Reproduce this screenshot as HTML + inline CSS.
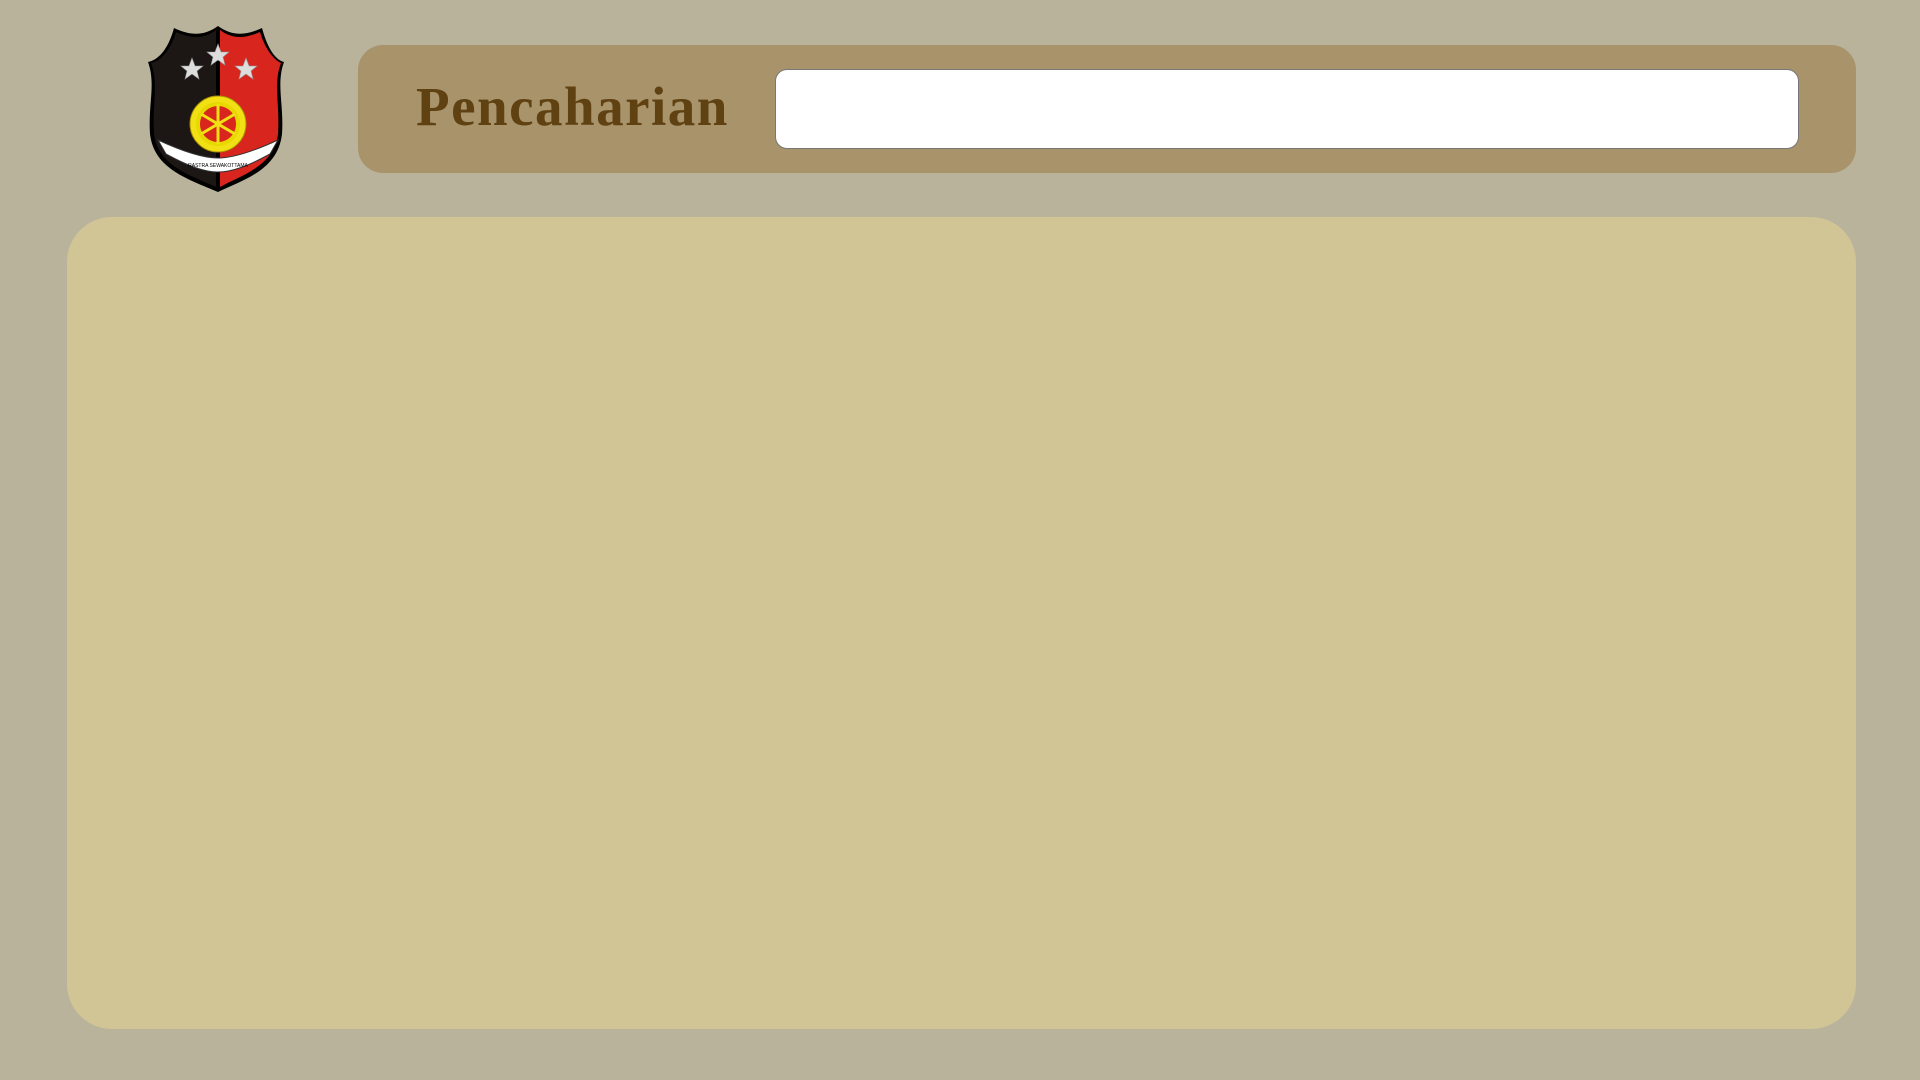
<!DOCTYPE html>
<html><head><meta charset="utf-8"><style>
html,body{margin:0;padding:0;width:1920px;height:1080px;background:#bab39c;overflow:hidden;position:relative}
.hdr{position:absolute;left:358px;top:45px;width:1498px;height:128px;background:#a8936b;border-radius:25px}
.ttl{position:absolute;left:416px;top:72px;font-family:"Liberation Serif",serif;font-weight:bold;font-size:55px;color:#5f4112;line-height:70px;letter-spacing:1.5px}
.inp{position:absolute;left:775px;top:69px;width:1024px;height:80px;background:#fff;border:1px solid #777;border-radius:12px;box-sizing:border-box}
.panel{position:absolute;left:67px;top:217px;width:1789px;height:812px;background:#d1c596;border-radius:45px}
svg{position:absolute;left:146px;top:24px}
</style></head><body>
<svg width="140" height="170" viewBox="0 0 140 170">
<path d="M2,38 C12,36 22,26 28,4 C45,12 58,12 72,2 C86,12 99,12 116,4 C122,26 130,36 138,38 C130,60 138,80 136,110 C132,145 100,155 72,168 C42,155 8,145 4,110 C2,80 10,60 2,38Z" fill="#000"/>
<path d="M5,39 C14,37 24,28 30,8 C46,15 58,15 70,6 L70,163 C44,151 12,142 8,110 C6,80 13,60 5,39Z" fill="#1c1615"/>
<path d="M74,6 C86,15 98,15 114,8 C120,28 130,37 135,39 C127,60 134,80 132,110 C128,142 96,151 74,163Z" fill="#d8251e"/>
<g fill="#ddd" stroke="#999" stroke-width="0.6">
<polygon points="72,20 75,28 83,28 77,33 79,41 72,36 65,41 67,33 61,28 69,28"/>
<polygon points="46,34 49,42 57,42 51,47 53,55 46,50 39,55 41,47 35,42 43,42"/>
<polygon points="100,34 103,42 111,42 105,47 107,55 100,50 93,55 95,47 89,42 97,42"/>
</g>
<circle cx="72" cy="100" r="28" fill="#f0e014" stroke="#a99000" stroke-width="1"/>
<circle cx="72" cy="100" r="20" fill="#d8251e" stroke="#e8d800" stroke-width="4"/>
<g stroke="#f0e014" stroke-width="3"><line x1="72" y1="80" x2="72" y2="120"/><line x1="55" y1="90" x2="89" y2="110"/><line x1="55" y1="110" x2="89" y2="90"/></g>
<path d="M12,116 C38,128 58,134 72,134 C86,134 106,128 132,116 L124,130 C102,142 86,148 72,148 C58,148 42,142 20,130Z" fill="#fff" stroke="#333" stroke-width="1"/>
<text x="72" y="143" font-family="Liberation Sans,sans-serif" font-size="5" text-anchor="middle" fill="#000">RASTRA SEWAKOTTAMA</text>
</svg>
<div class="hdr"></div>
<div class="ttl">Pencaharian</div>
<div class="inp"></div>
<div class="panel"></div>
</body></html>
